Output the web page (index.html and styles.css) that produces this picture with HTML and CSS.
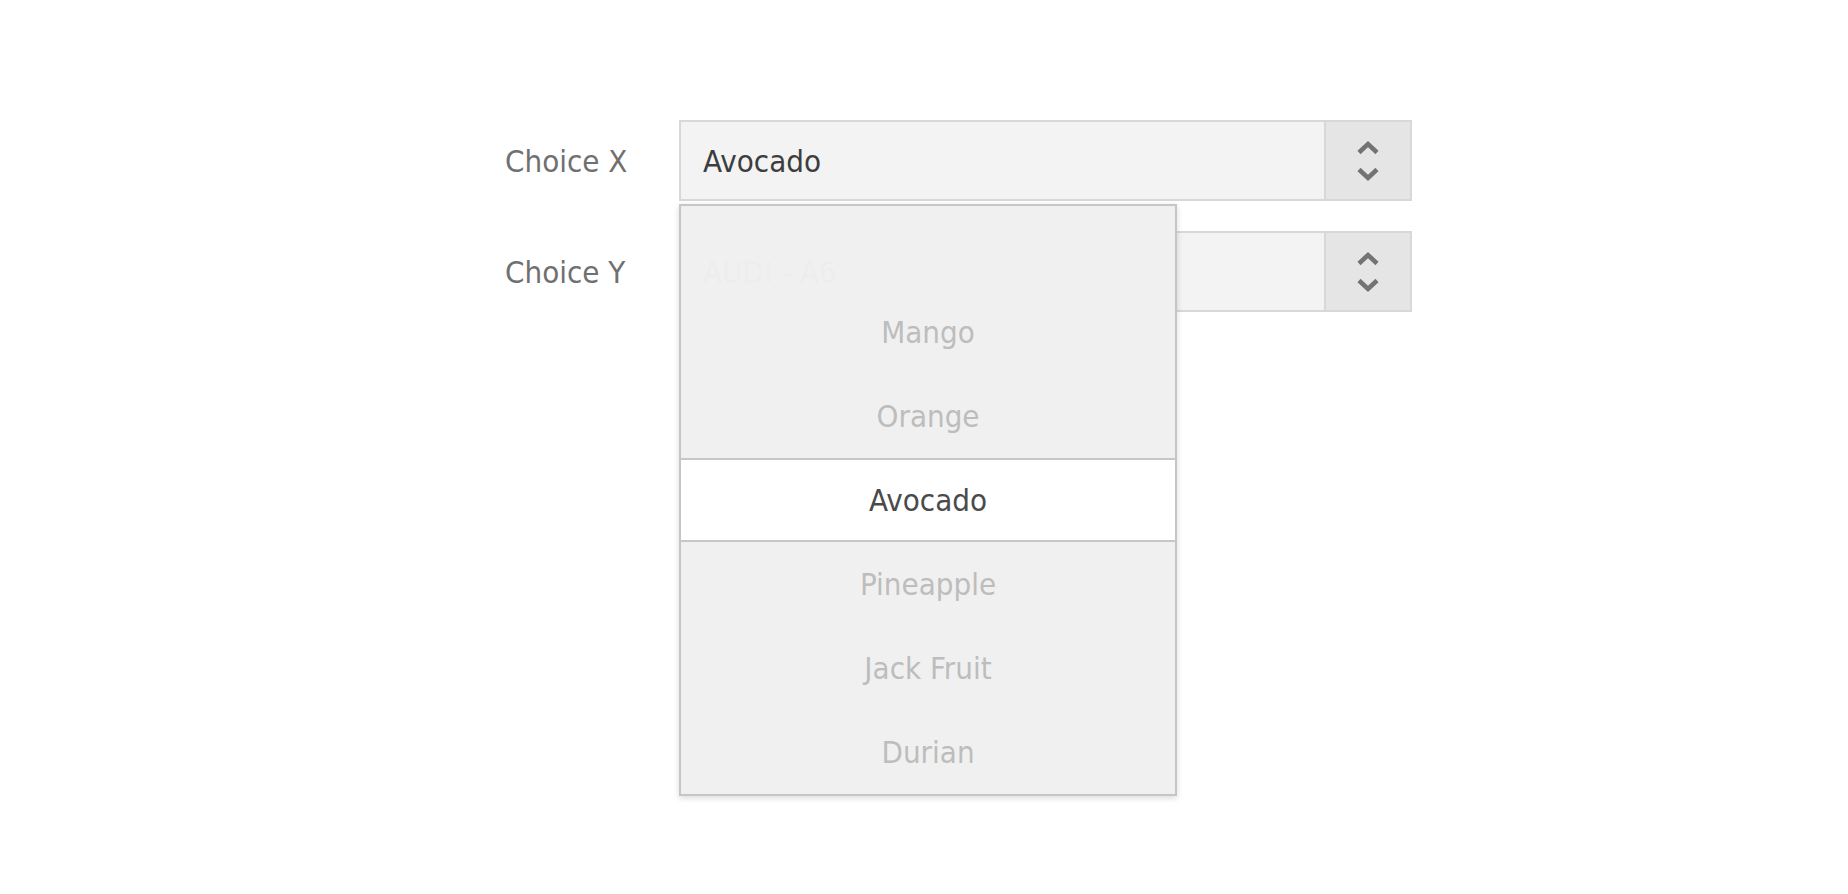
FILE: index.html
```html
<!DOCTYPE html>
<html>
<head>
<meta charset="utf-8">
<link rel="stylesheet" href="styles.css">
</head>
<body>
<div class="form">
  <div class="row">
    <div class="label">Choice X</div>
    <div class="select top">
      <div class="value">Avocado</div>
      <div class="btn">
        <svg width="24" height="42" viewBox="0 0 24 42"><polyline points="3,12.5 12,4 21,12.5" fill="none" stroke="#737373" stroke-width="4.5"/><polyline points="3,29.5 12,38 21,29.5" fill="none" stroke="#737373" stroke-width="4.5"/></svg>
      </div>
      <div class="dropdown">
        <div class="item"></div>
        <div class="item">Mango</div>
        <div class="item">Orange</div>
        <div class="item active">Avocado</div>
        <div class="item">Pineapple</div>
        <div class="item">Jack Fruit</div>
        <div class="item">Durian</div>
      </div>
    </div>
  </div>
  <div class="row">
    <div class="label">Choice Y</div>
    <div class="select">
      <div class="value">AUDI - A6</div>
      <div class="btn">
        <svg width="24" height="42" viewBox="0 0 24 42"><polyline points="3,12.5 12,4 21,12.5" fill="none" stroke="#737373" stroke-width="4.5"/><polyline points="3,29.5 12,38 21,29.5" fill="none" stroke="#737373" stroke-width="4.5"/></svg>
      </div>
    </div>
  </div>
</div>
</body>
</html>
```
FILE: styles.css
```css
html, body {
  margin: 0;
  padding: 0;
  background: #ffffff;
  height: 100%;
}
body {
  font-family: "DejaVu Sans Condensed", "DejaVu Sans", sans-serif;
  min-height: 894px;
}
.form {
  padding: 120px 0 0 505px;
  display: flex;
  flex-direction: column;
  gap: 30px;
}
.row {
  display: flex;
  align-items: center;
}
.label {
  width: 174px;
  font-size: 31px;
  color: #707070;
}
.select {
  position: relative;
  width: 733px;
  height: 81px;
  box-sizing: border-box;
  border: 2px solid #d8d8d8;
  background: #f3f3f3;
  display: flex;
}
.select.top {
  z-index: 2;
}
.value {
  flex: 1;
  padding-left: 22px;
  display: flex;
  align-items: center;
  font-size: 31px;
  color: #3d3d3d;
}
.btn {
  width: 84px;
  border-left: 2px solid #d8d8d8;
  background: #e5e5e5;
  display: flex;
  align-items: center;
  justify-content: center;
}
.btn svg {
  display: block;
}
.dropdown {
  position: absolute;
  left: -2px;
  top: 82px;
  width: 498px;
  box-sizing: border-box;
  border: 2px solid #c6c6c6;
  background: rgba(240, 240, 240, 0.985);
  box-shadow: 0 2px 6px rgba(0, 0, 0, 0.15);
  z-index: 10;
}
.item {
  height: 84px;
  box-sizing: border-box;
  display: flex;
  align-items: center;
  justify-content: center;
  font-size: 31px;
  color: #bdbdbd;
}
.item.active {
  background: #ffffff;
  border-top: 2px solid #c6c6c6;
  border-bottom: 2px solid #c6c6c6;
  color: #4a4a4a;
}
```
